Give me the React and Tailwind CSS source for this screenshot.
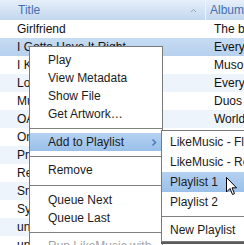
import React from "react";

const rows = [
  ["Girlfriend", "The best damn thing"],
  ["I Gotta Have It Right", "Every Kind of Mood"],
  ["I Kissed a Girl", "Muso"],
  ["Love Song", "Every Kind of Mood"],
  ["Music", "Duos II"],
  ["OAR", "World"],
  ["One", ""],
  ["Promise", ""],
  ["Restless", ""],
  ["Smile", ""],
  ["Sympathy", ""],
  ["untitled", ""],
  ["untitled 2", ""],
];

function Sep({ tall }) {
  return (
    <div className={`${tall ? "h-[12px]" : "h-[10px]"} flex items-center`}>
      <div className="h-px w-full bg-[#808080]" />
    </div>
  );
}

function Item({ children, active, disabled, arrow }) {
  return (
    <div
      className={`h-[18px] flex items-center pl-[18px] pr-[4px] whitespace-nowrap ${
        active ? "bg-gradient-to-b from-[#b4d1f1] to-[#9ac0ea]" : ""
      } ${disabled ? "text-[#a3a3a3]" : "text-[#1c1c1c]"}`}
    >
      <span className="flex-1">{children}</span>
      {arrow && (
        <svg width="6" height="9" viewBox="0 0 6 9" className="mr-[1px]">
          <path d="M1.5 1.5 L4.5 4.5 L1.5 7.5" fill="none" stroke="#4b7dc4" strokeWidth="1.6" />
        </svg>
      )}
    </div>
  );
}

function SubItem({ children, active }) {
  return (
    <div
      className={`h-[20px] flex items-center pl-[8px] whitespace-nowrap text-[#1c1c1c] ${
        active ? "bg-gradient-to-b from-[#b4d1f1] to-[#9ac0ea]" : ""
      }`}
    >
      {children}
    </div>
  );
}

export default function App() {
  return (
    <div
      className="relative w-[244px] h-[245px] overflow-hidden bg-white text-[12px] text-[#111]"
      style={{ fontFamily: '"Liberation Sans", Arial, sans-serif' }}
    >
      {/* header */}
      <div className="flex h-[20px] bg-gradient-to-b from-[#e6effa] to-[#c3d7ee] text-[#4470ad]">
        <div className="w-[210px] flex items-center pl-[18px] pr-[8px] border-r border-[#eef4fb]">
          <span className="flex-1">Title</span>
          <svg width="7" height="5" viewBox="0 0 7 5">
            <path d="M1 4 L3.5 1.5 L6 4" fill="none" stroke="#8fa4bd" strokeWidth="1" />
          </svg>
        </div>
        <div className="flex-1 flex items-center pl-[4px] whitespace-nowrap">Album</div>
      </div>
      {/* rows */}
      {rows.map(([t, a], i) => (
        <div
          key={i}
          className={`flex h-[18px] ${
            i === 1
              ? "bg-gradient-to-b from-[#c6dcf3] to-[#b6d0ee]"
              : i % 2 === 1
              ? "bg-[#eef4fb]"
              : "bg-white"
          }`}
        >
          <div className="w-[210px] flex items-center pl-[17px] whitespace-nowrap overflow-hidden">{t}</div>
          <div className="flex-1 flex items-center pl-[4px] whitespace-nowrap overflow-hidden">{a}</div>
        </div>
      ))}

      {/* context menu */}
      <div className="absolute left-[29px] top-[46px] w-[134px] h-[220px] overflow-hidden bg-white border border-[#7a7a7a] pt-[4px]">
        <Item>Play</Item>
        <Item>View Metadata</Item>
        <Item>Show File</Item>
        <Item>Get Artwork…</Item>
        <Sep />
        <Item active arrow>Add to Playlist</Item>
        <Sep />
        <Item>Remove</Item>
        <Sep tall />
        <Item>Queue Next</Item>
        <Item>Queue Last</Item>
        <Sep />
        <Item disabled>Run LikeMusic with…</Item>
      </div>

      {/* submenu */}
      <div className="absolute left-[161px] top-[130px] w-[110px] h-[112px] bg-white border border-[#7a7a7a] py-[1px] shadow-[0_2px_0_#5a5a5a]">
        <SubItem>LikeMusic - Flagged</SubItem>
        <SubItem>LikeMusic - Recent</SubItem>
        <SubItem active>Playlist 1</SubItem>
        <SubItem>Playlist 2</SubItem>
        <div className="h-[8px] flex items-center">
          <div className="h-px w-full bg-[#808080]" />
        </div>
        <SubItem>New Playlist</SubItem>
      </div>

      {/* cursor */}
      <svg className="absolute left-[226px] top-[177px]" width="12" height="19" viewBox="0 0 12 19">
        <path
          d="M0.5 0.5 L0.5 15 L4 11.5 L6.5 17.5 L8.5 16.6 L6 10.8 L10.5 10.8 Z"
          fill="#fff"
          stroke="#000"
          strokeWidth="1"
          strokeLinejoin="miter"
        />
      </svg>
    </div>
  );
}
